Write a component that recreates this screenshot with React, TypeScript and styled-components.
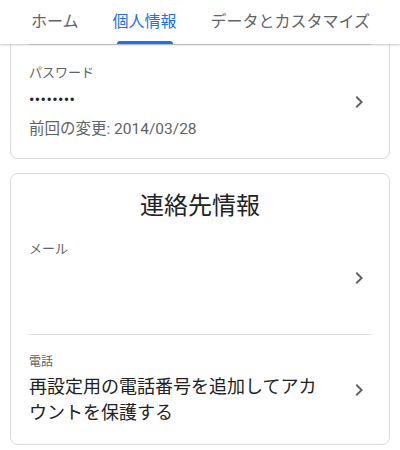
import React from 'react';
import styled, { createGlobalStyle } from 'styled-components';

const GlobalStyle = createGlobalStyle`
  html, body {
    margin: 0;
    padding: 0;
    background: #ffffff;
  }
  body {
    font-family: Roboto, "Noto Sans CJK JP", "Noto Sans", sans-serif;
    color: #202124;
  }
`;

const Screen = styled.div`
  width: 400px;
  height: 450px;
  overflow: hidden;
  background: #ffffff;
`;

const TabBar = styled.nav`
  position: relative;
  z-index: 1;
  display: flex;
  height: 44px;
  padding-left: 14px;
  background: #ffffff;
  box-shadow: 0 1px 2px rgba(60, 64, 67, 0.3);
`;

const Tab = styled.div<{ active?: boolean }>`
  position: relative;
  display: flex;
  align-items: center;
  padding: 0 17px 4px;
  font-size: 16px;
  white-space: nowrap;
  color: ${(props) => (props.active ? '#1a73e8' : '#5f6368')};
`;

const Indicator = styled.span`
  position: absolute;
  left: 21px;
  right: 21px;
  bottom: 0;
  height: 3px;
  border-radius: 3px 3px 0 0;
  background: #1a73e8;
`;

const Content = styled.main`
  display: flex;
  flex-direction: column;
  gap: 14px;
  padding: 0 10px;
`;

const Card = styled.section<{ clipped?: boolean }>`
  border: 1px solid #dadce0;
  border-top: ${(props) => (props.clipped ? 'none' : '1px solid #dadce0')};
  border-radius: ${(props) => (props.clipped ? '0 0 8px 8px' : '8px')};
  background: #ffffff;
`;

const CardTitle = styled.h2`
  margin: 0;
  padding-top: 16px;
  font-size: 24px;
  font-weight: 400;
  line-height: 32px;
  text-align: center;
  color: #202124;
`;

const Divider = styled.hr`
  margin: 0 18px;
  border: none;
  border-top: 1px solid #dadce0;
`;

const Row = styled.div<{ top?: number; bottom?: number }>`
  display: flex;
  align-items: center;
  gap: 30px;
  padding: ${(props) => props.top ?? 19}px 18px ${(props) => props.bottom ?? 19}px;
`;

const RowBody = styled.div`
  flex: 1;
  min-width: 0;
  display: flex;
  flex-direction: column;
`;

const Label = styled.div<{ size?: number }>`
  font-size: ${(props) => props.size ?? 12}px;
  line-height: 16px;
  color: #5f6368;
`;

const Dots = styled.div`
  margin-top: 9px;
  font-size: 16px;
  line-height: 20px;
  letter-spacing: 0.4px;
  color: #202124;
`;

const Note = styled.div`
  margin-top: 9px;
  font-size: 15.5px;
  line-height: 20px;
  color: #5f6368;
`;

const Value = styled.div`
  margin-top: 4px;
  font-size: 18px;
  line-height: 26px;
  color: #202124;
`;

const HiddenValue = styled.div`
  height: 58px;
`;

const Chevron = styled.svg`
  flex: none;
  width: 24px;
  height: 24px;
  fill: #5f6368;
`;

function ChevronRight() {
  return (
    <Chevron viewBox="0 0 24 24">
      <path d="M10 6 8.59 7.41 13.17 12l-4.58 4.59L10 18l6-6z" />
    </Chevron>
  );
}

const tabs = ['ホーム', '個人情報', 'データとカスタマイズ'];

export default function App() {
  return (
    <>
      <GlobalStyle />
      <Screen>
        <TabBar>
          {tabs.map((t) => (
            <Tab key={t} active={t === '個人情報'}>
              {t}
              {t === '個人情報' && <Indicator />}
            </Tab>
          ))}
        </TabBar>
        <Content>
          <Card clipped>
            <Divider />
            <Row top={20} bottom={19}>
              <RowBody>
                <Label size={13}>パスワード</Label>
                <Dots>••••••••</Dots>
                <Note>前回の変更: 2014/03/28</Note>
              </RowBody>
              <ChevronRight />
            </Row>
          </Card>
          <Card>
            <CardTitle>連絡先情報</CardTitle>
            <Row>
              <RowBody>
                <Label size={13}>メール</Label>
                <HiddenValue />
              </RowBody>
              <ChevronRight />
            </Row>
            <Divider />
            <Row top={19} bottom={18}>
              <RowBody>
                <Label>電話</Label>
                <Value>
                  再設定用の電話番号を追加してアカ
                  <br />
                  ウントを保護する
                </Value>
              </RowBody>
              <ChevronRight />
            </Row>
          </Card>
        </Content>
      </Screen>
    </>
  );
}
